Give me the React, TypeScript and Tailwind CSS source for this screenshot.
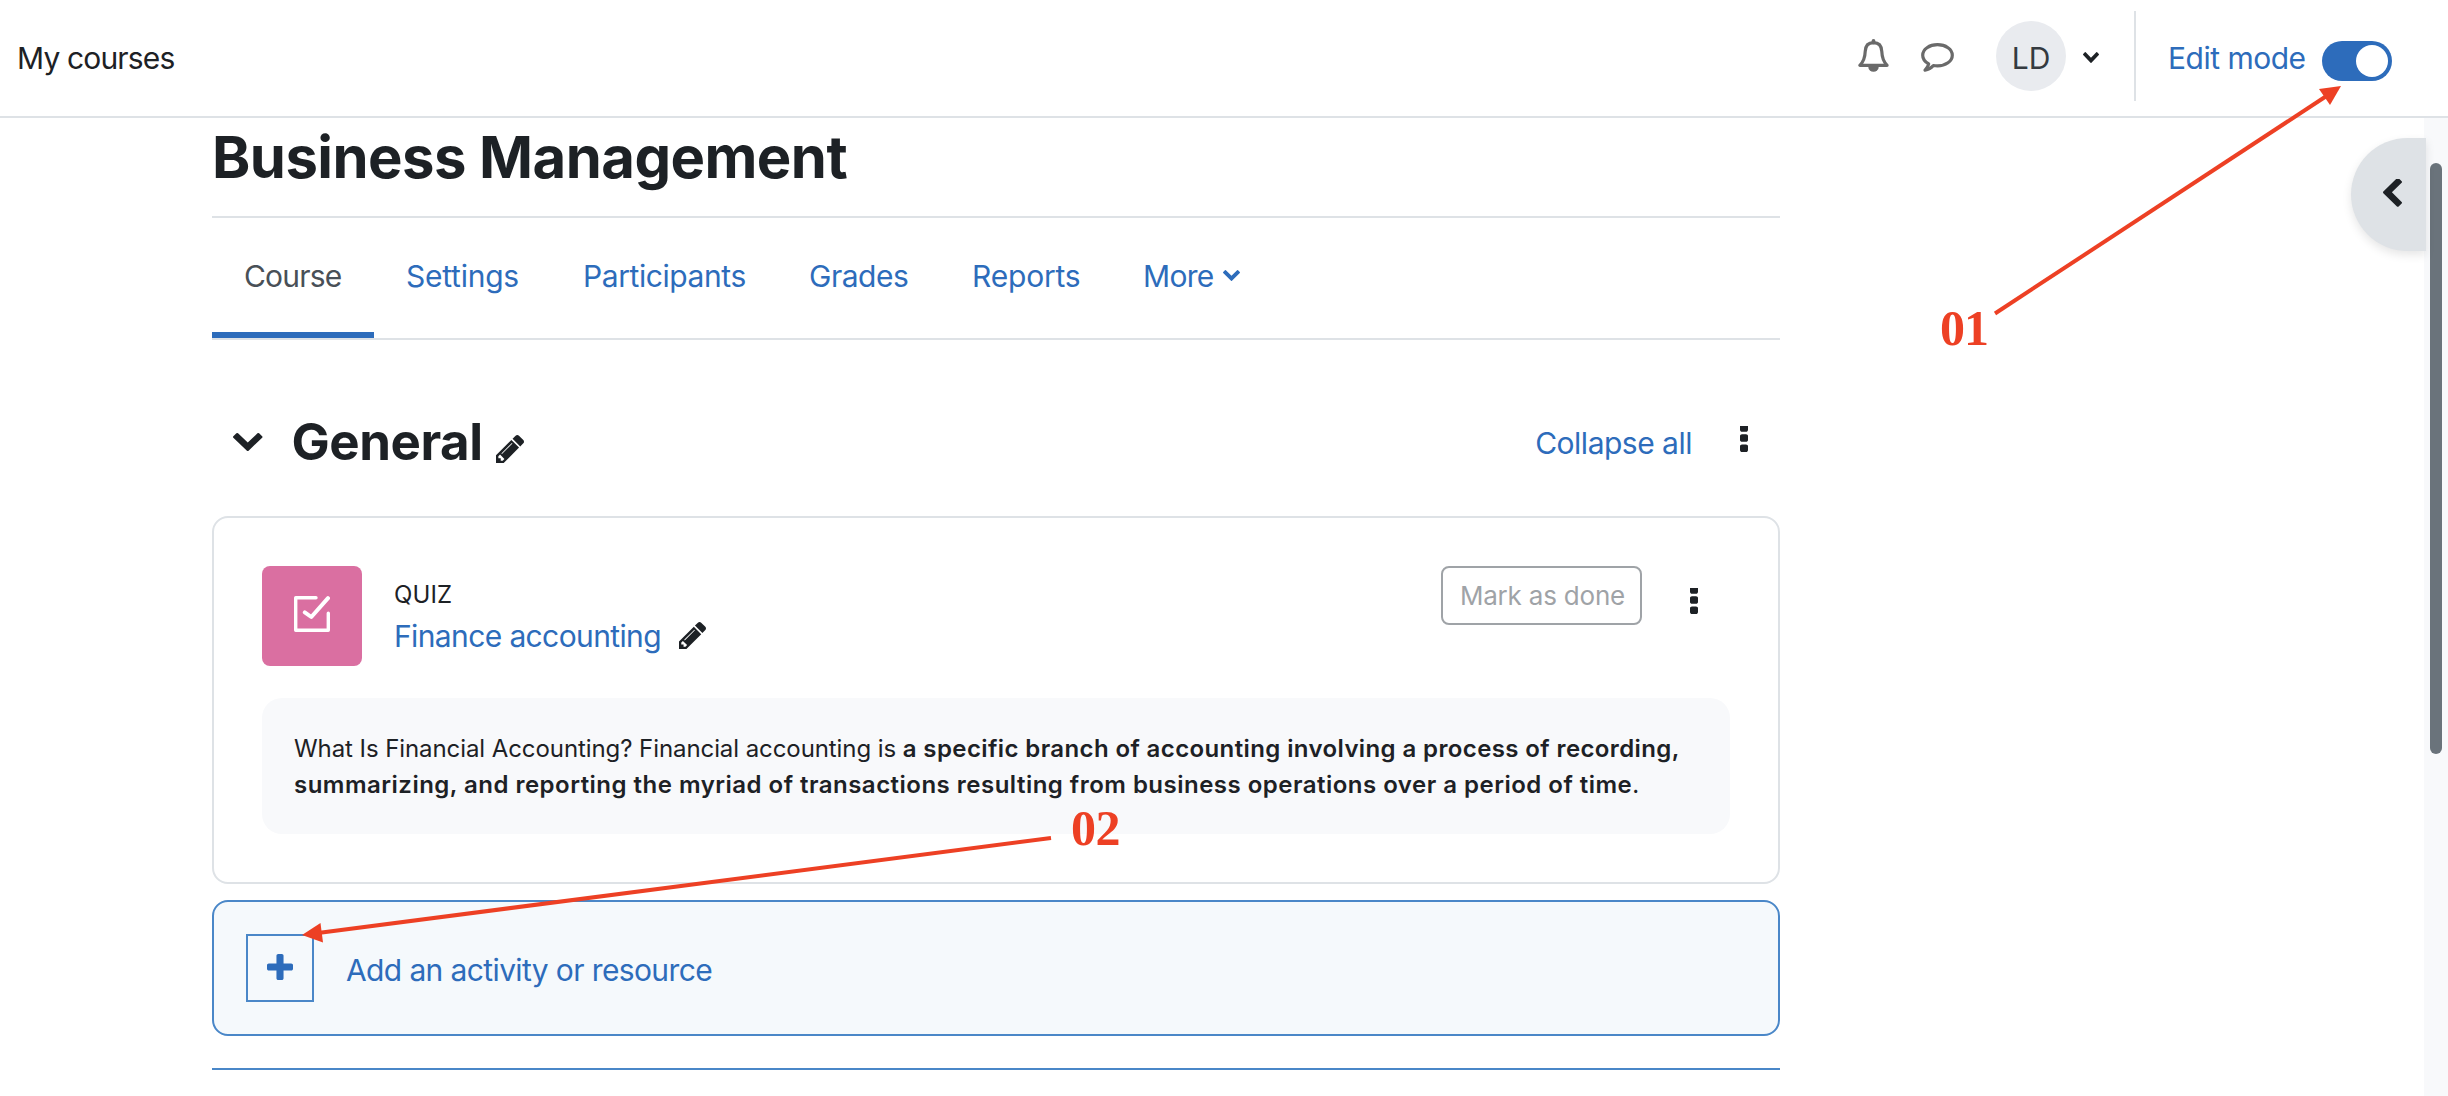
import type { ReactNode } from 'react';

const CHEVRON_DOWN =
  'M1683 808l-742 741q-19 19-45 19t-45-19l-742-741q-19-19-19-45.5t19-45.5l166-165q19-19 45-19t45 19l531 531 531-531q19-19 45-19t45 19l166 165q19 19 19 45.5t-19 45.5z';

function Glyph({ d, box, className }: { d: string; box: string; className: string }) {
  return (
    <svg viewBox={box} preserveAspectRatio="none" fill="currentColor" className={`block shrink-0 ${className}`}>
      <path d={d} />
    </svg>
  );
}

function ChevronDown({ className }: { className: string }) {
  return <Glyph d={CHEVRON_DOWN} box="90 533 1612 1035" className={className} />;
}

function Pencil({ className }: { className: string }) {
  return (
    <Glyph
      box="128 149 1515 1515"
      className={className}
      d="M491 1536l91-91-235-235-91 91v107h128v128h107zm523-928q0-22-22-22-10 0-17 7l-542 542q-7 7-7 17 0 22 22 22 10 0 17-7l542-542q7-7 7-17zm-54-192l416 416-832 832h-416v-416zm683 96q0 53-37 90l-166 166-416-416 166-165q36-38 90-38 53 0 91 38l235 234q37 39 37 91z"
    />
  );
}

function Kebab({ className }: { className: string }) {
  return (
    <Glyph
      box="704 224 384 1312"
      className={`h-[26px] w-2 ${className}`}
      d="M1088 1248v192q0 40-28 68t-68 28h-192q-40 0-68-28t-28-68v-192q0-40 28-68t68-28h192q40 0 68 28t28 68zm0-512v192q0 40-28 68t-68 28h-192q-40 0-68-28t-28-68v-192q0-40 28-68t68-28h192q40 0 68 28t28 68zm0-512v192q0 40-28 68t-68 28h-192q-40 0-68-28t-28-68v-192q0-40 28-68t68-28h192q40 0 68 28t28 68z"
    />
  );
}

function Header() {
  return (
    <header className="flex h-[118px] shrink-0 items-start border-b-2 border-[#dee2e6] bg-white">
      <a className="ml-[17px] mt-[35px] tracking-[-0.85px] text-[#1d2125]">My courses</a>
      <div className="ml-auto flex items-start">
        <svg viewBox="0 0 31 33" className="mt-[39px] h-[33px] w-[31px] text-[#6a6a6a]" fill="none" stroke="currentColor">
          <path d="M15.5 3.600C9.600 3.600 7.400 7.600 7.200 12.500C7 19 5.200 23 1.900 26.300H29.100C25.800 23 24 19 23.800 12.500C23.600 7.600 21.400 3.600 15.500 3.600Z" strokeWidth="3.200" strokeLinejoin="round" />
          <path d="M15.500 1.900V3.500" strokeWidth="3.800" strokeLinecap="round" />
          <path d="M10.200 27.500H20.800A5.300 5.300 0 0 1 10.200 27.500Z" fill="currentColor" stroke="none" />
        </svg>
        <svg viewBox="0 0 33 29" className="ml-8 mt-[43px] h-[29px] w-[33px] text-[#6a6a6a]" fill="none" stroke="currentColor">
          <path
            d="M16.500 1.700C8.300 1.700 1.700 6.200 1.700 12.200C1.700 15.900 4.100 19 7.700 20.900C7.100 23.800 5.900 25.500 4 27.200C7.200 26.700 10.100 25.200 12.400 22.500C13.700 22.700 15.100 22.800 16.500 22.800C24.700 22.800 31.300 18.200 31.300 12.200C31.300 6.200 24.700 1.700 16.500 1.700Z"
            strokeWidth="3.200"
            strokeLinejoin="round"
          />
        </svg>
        <div className="ml-[42px] mt-[21px] flex size-[70px] items-start justify-center rounded-full bg-[#e9ebef] pt-[14px] text-[#343a40]">LD</div>
        <ChevronDown className="ml-[17px] mt-[52px] h-[11px] w-4" />
        <div className="ml-[35px] mt-[11px] h-[90px] w-0.5 bg-[#dee2e6]" />
        <span className="ml-[32px] mt-[35px] w-[154px] whitespace-nowrap tracking-[-0.500px] text-[#2d6cbb]">Edit mode</span>
        <div className="mr-14 mt-[41px] flex h-10 w-[70px] items-center justify-end rounded-full bg-[#2d6cbb] pr-1">
          <div className="size-8 rounded-full bg-white" />
        </div>
      </div>
    </header>
  );
}

function Tab({ className, children }: { className: string; children: ReactNode }) {
  return <a className={`flex h-full shrink-0 whitespace-nowrap pl-8 pt-[35px] ${className}`}>{children}</a>;
}

function Tabs() {
  return (
    <nav className="mt-[23px] flex h-[124px] border-y-2 border-[#dee2e6] text-[#2d6cbb]">
      <Tab className="w-[162px] border-b-[6px] border-[#2d6cbb] tracking-[-0.8px] text-[#495057]">Course</Tab>
      <Tab className="w-[177px] tracking-[-0.25px]">Settings</Tab>
      <Tab className="w-[226px] tracking-[-0.420px]">Participants</Tab>
      <Tab className="w-[163px] tracking-[-0.500px]">Grades</Tab>
      <Tab className="w-[171px] tracking-[-0.200px]">Reports</Tab>
      <Tab className="tracking-[-0.700px]">
        More
        <ChevronDown className="ml-[9px] mt-[17px] h-[11px] w-[17px]" />
      </Tab>
    </nav>
  );
}

function QuizIcon() {
  return (
    <div className="flex size-[100px] items-center justify-center rounded-lg bg-[#da6fa1]">
      <svg viewBox="0 0 36 36" className="-mt-1 size-9" fill="none" stroke="white" strokeLinecap="round" strokeLinejoin="round">
        <path d="M22 1.700H1.700V34.300H34.300V17.300" strokeWidth="3.400" />
        <path d="M10.800 16.300L17.300 21L34 2.200" strokeWidth="4" />
      </svg>
    </div>
  );
}

function QuizCard() {
  return (
    <section className="mt-[53px] h-[368px] rounded-2xl border-2 border-[#dee2e6] px-12 pt-12">
      <div className="flex items-start">
        <QuizIcon />
        <div className="ml-8">
          <div className="mt-[13px] text-2xl leading-8 tracking-[0.1px]">QUIZ</div>
          <div className="flex items-start">
            <a className="mt-[2px] whitespace-nowrap tracking-[-0.620px] text-[#2d6cbb]">Finance accounting</a>
            <Pencil className="ml-[18px] mt-[11px] size-[27px]" />
          </div>
        </div>
        <button className="ml-auto h-[59px] w-[201px] rounded-lg border-2 border-[#9fa3a7] pl-[2px] text-[26px] leading-[54px] tracking-[-0.2px] text-[#9fa3a7]">
          Mark as done
        </button>
        <Kebab className="ml-12 mr-8 mt-[22px]" />
      </div>
      <div className="mt-8 h-[136px] whitespace-nowrap rounded-[20px] bg-[#f8f9fb] px-8 pt-[33px] text-2xl leading-9">
        <p>
          <span className="tracking-[-0.08px]">What Is Financial Accounting? Financial accounting is </span>
          <b className="font-semibold tracking-[0.39px]">a specific branch of accounting involving a process of recording,</b>
        </p>
        <p>
          <b className="font-semibold tracking-[0.487px]">
            summarizing, and reporting the myriad of transactions resulting from business operations over a period of time
          </b>
          .
        </p>
      </div>
    </section>
  );
}

function AddActivity() {
  return (
    <button className="mt-4 flex h-[136px] w-full items-center rounded-2xl border-2 border-[#4a87c8] bg-[#f5f9fc] pl-8 text-[#2d6cbb]">
      <span className="flex size-[68px] justify-center border-2 border-[#4a87c8] pt-[18px]">
        <Glyph
          box="192 128 1408 1408"
          className="size-[26px]"
          d="M1600 736v192q0 40-28 68t-68 28h-416v416q0 40-28 68t-68 28h-192q-40 0-68-28t-28-68v-416h-416q-40 0-68-28t-28-68v-192q0-40 28-68t68-28h416v-416q0-40 28-68t68-28h192q40 0 68 28t28 68v416h416q40 0 68 28t28 68z"
        />
      </span>
      <span className="ml-8 pt-[3px] tracking-[-0.620px]">Add an activity or resource</span>
    </button>
  );
}

function DrawerRail() {
  return (
    <aside className="ml-auto flex h-full items-start">
      <div className="relative z-10 -mr-0.5 mt-5 flex h-[113px] w-[75px] items-start rounded-l-full bg-[#dee2e6] pl-[32px] pt-[41px] shadow-[0_4px_10px_rgba(0,0,0,0.1)]">
        <Glyph
          box="410 90 1036 1612"
          className="h-[29px] w-[19px]"
          d="M1427 301l-531 531 531 531q19 19 19 45t-19 45l-166 166q-19 19-45 19t-45-19l-742-742q-19-19-19-45t19-45l742-742q19-19 45-19t45 19l166 166q19 19 19 45t-19 45z"
        />
      </div>
      <div className="h-full w-6 bg-[#f8f9fb] pl-1.5 pt-[45px]">
        <div className="h-[591px] w-3 rounded-full bg-[#6a737b]" />
      </div>
    </aside>
  );
}

function Annotations() {
  return (
    <div className="pointer-events-none absolute inset-0 z-20 font-['Liberation_Serif',serif] text-[50px] font-bold leading-none text-[#ed4024]">
      <svg viewBox="0 0 2448 1096" className="absolute inset-0 size-full" fill="currentColor" stroke="currentColor">
        <path d="M1995 313.500L2328 95" strokeWidth="4" />
        <path d="M2341 86L2319 89L2330 105Z" stroke="none" />
        <path d="M1051 838L318 933" strokeWidth="4" />
        <path d="M302 935L320.500 923L323 942.500Z" stroke="none" />
      </svg>
      <span className="absolute left-[1940px] top-[303px] tracking-[-1px]">01</span>
      <span className="absolute left-[1071px] top-[803px] tracking-[-0.500px]">02</span>
    </div>
  );
}

export default function App() {
  return (
    <div className="relative flex h-[1096px] w-[2448px] flex-col overflow-hidden bg-white font-['Inter','Liberation_Sans',sans-serif] text-[30px] leading-[46px] text-[#1d2125]">
      <Header />
      <div className="flex min-h-0 flex-1">
        <main className="ml-[212px] w-[1568px] shrink-0">
          <h1 className="mt-[3px] whitespace-nowrap text-[58px] font-bold leading-[72px] tracking-[-0.55px]">Business Management</h1>
          <Tabs />
          <div className="mt-[73px] flex h-[50px] items-start">
            <ChevronDown className="ml-[21px] mt-5 h-[18px] w-[29.500px]" />
            <h2 className="ml-[29px] mt-[-1px] w-[190px] text-[51px] font-bold leading-[60px] tracking-[-0.45px]">General</h2>
            <Pencil className="ml-[14px] mt-[22px] size-7" />
            <a className="ml-auto mt-[7px] tracking-[-0.500px] text-[#2d6cbb]">Collapse all</a>
            <Kebab className="ml-[48px] mr-8 mt-[13px]" />
          </div>
          <QuizCard />
          <AddActivity />
          <div className="mt-8 h-0.5 bg-[#4a87c8]" />
        </main>
        <DrawerRail />
      </div>
      <Annotations />
    </div>
  );
}
